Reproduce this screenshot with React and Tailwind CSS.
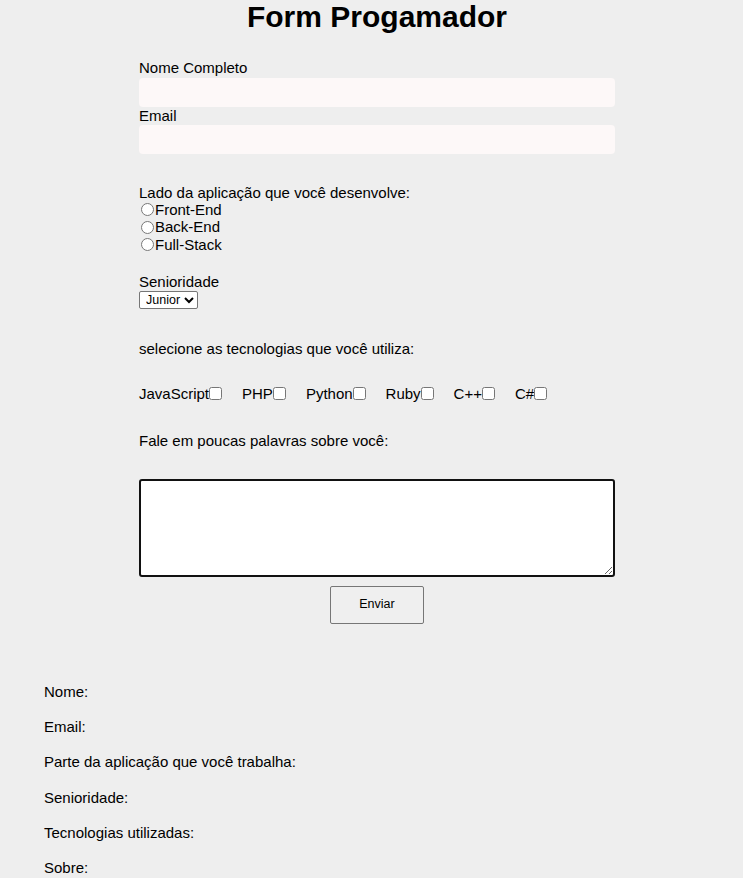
import React from 'react';

const techs = ['JavaScript', 'PHP', 'Python', 'Ruby', 'C++', 'C#'];
const lados = ['Front-End', 'Back-End', 'Full-Stack'];
const resultado = ['Nome:', 'Email:', 'Parte da aplicação que você trabalha:', 'Senioridade:', 'Tecnologias utilizadas:', 'Sobre:'];

export default function App() {
  return (
    <div className="min-h-[878px] bg-[#eeeeee] text-black text-[15px] leading-[17.25px] font-['Liberation_Sans',Arial,sans-serif]">
      <form className="ml-[139px] w-[476px]" onSubmit={(e) => e.preventDefault()}>
        <h1 className="text-center text-[30px] font-bold leading-[34.5px] mb-[24px]">Form Progamador</h1>

        <label className="block">Nome Completo</label>
        <input type="text" className="block w-full h-[29px] mt-[2px] rounded-[4px] bg-[#fdf8f8] outline-none" />

        <label className="block">Email</label>
        <input type="email" className="block w-full h-[29px] mt-[1px] rounded-[4px] bg-[#fdf8f8] outline-none" />

        {/* lado da aplicação */}
        <div className="mt-[29.5px]">
          <p>Lado da aplicação que você desenvolve:</p>
          {lados.map((l) => (
            <div key={l} className="flex items-center h-[17.5px]">
              <input type="radio" name="lado" className="m-0 ml-[2px] w-[13px] h-[13px]" />
              <span className="ml-[1px]">{l}</span>
            </div>
          ))}
        </div>

        <div className="mt-[20px]">
          <p>Senioridade</p>
          <select className="block h-[18px] w-[59px] text-[12.5px] leading-[14px] border border-[#767676] rounded-[2px] bg-white pl-[2px]">
            <option>Junior</option>
            <option>Pleno</option>
            <option>Senior</option>
          </select>
        </div>

        <p className="mt-[31px]">selecione as tecnologias que você utiliza:</p>

        <div className="flex items-center mt-[28px] h-[17.25px]">
          {techs.map((t) => (
            <label key={t} className="flex items-center mr-[20px]">
              {t}
              <input type="checkbox" className="m-0 w-[13px] h-[13px]" />
            </label>
          ))}
        </div>

        <p className="mt-[29.5px]">Fale em poucas palavras sobre você:</p>

        <textarea className="block w-[476px] h-[98px] mt-[30px] bg-white border-2 border-[#111111] rounded-[3px]" />

        <div className="flex justify-center mt-[9px]">
          <button type="submit" className="w-[94px] h-[38px] border border-[#767676] rounded-[2px] bg-[#efefef] text-[12.5px]">
            Enviar
          </button>
        </div>
      </form>

      <div className="mt-[59px] ml-[44px] flex flex-col gap-[18px] pb-2">
        {resultado.map((r) => (
          <p key={r}>{r}</p>
        ))}
      </div>
    </div>
  );
}
